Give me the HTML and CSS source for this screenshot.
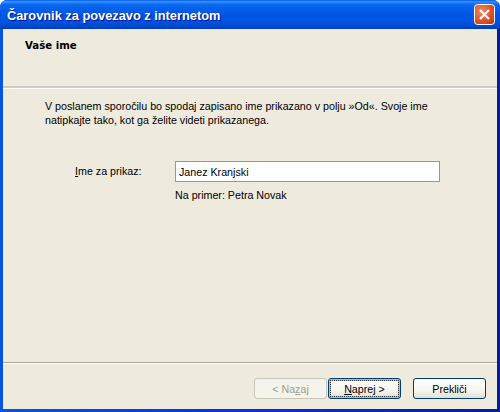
FILE: index.html
```html
<!DOCTYPE html>
<html lang="sl">
<head>
  <meta charset="UTF-8">
  <title>Čarovnik za povezavo z internetom</title>
  <link rel="stylesheet" href="styles.css">
</head>
<body>

<div class="window">
  <div class="titlebar">
    <span class="title">Čarovnik za povezavo z internetom</span>
    <svg class="close" width="21" height="21" viewBox="0 0 21 21">
      <defs>
        <radialGradient id="closeBg" cx="35%" cy="35%" r="80%">
          <stop offset="0" stop-color="#ee8a6c"/>
          <stop offset="0.55" stop-color="#e0572f"/>
          <stop offset="1" stop-color="#c13a12"/>
        </radialGradient>
      </defs>
      <rect x="0.5" y="0.5" width="20" height="20" rx="3" fill="url(#closeBg)" stroke="#fff"/>
      <path d="M6 6 L15 15 M15 6 L6 15" stroke="#fff" stroke-width="2.2" fill="none"/>
    </svg>
  </div>

  <div class="pane">
    <div class="header">Vaše ime</div>

    <div class="content">
      <p class="intro">V poslanem sporočilu bo spodaj zapisano ime prikazano v polju »Od«. Svoje ime natipkajte tako, kot ga želite videti prikazanega.</p>

      <div class="field">
        <label class="field-label" for="name"><u>I</u>me za prikaz:</label>
        <div class="field-main">
          <input class="textbox" id="name" type="text" value="Janez Kranjski">
          <div class="hint">Na primer: Petra Novak</div>
        </div>
      </div>
    </div>

    <div class="footer">
      <button class="btn" disabled>&lt; Na<u>z</u>aj</button>
      <button class="btn btn-default"><span class="focus"><u>N</u>aprej &gt;</span></button>
      <button class="btn btn-cancel">Prekliči</button>
    </div>
  </div>
</div>

</body>
</html>
```

FILE: styles.css
```css
* {
  margin: 0;
  padding: 0;
  box-sizing: border-box;
}

html, body {
  width: 500px;
  height: 412px;
  overflow: hidden;
}

body {
  font-family: "Liberation Sans", Arial, sans-serif;
  font-size: 10.7px;
  color: #000;
  background: #fff;
}

.window {
  width: 500px;
  height: 412px;
  display: flex;
  flex-direction: column;
  border-radius: 7px 7px 0 0;
  overflow: hidden;
  background: linear-gradient(to right, #0854e0 0, #0831d9 50%, #001ea0 100%);
}

.titlebar {
  height: 29px;
  flex: none;
  display: flex;
  align-items: center;
  justify-content: space-between;
  padding: 0 5px 0 7px;
  background: linear-gradient(to bottom, #0058ee 0%, #3a93ff 6%, #0a6af0 14%, #0055e5 50%, #0054e3 75%, #0048d0 90%, #003dc0 100%);
}

.title {
  font-family: "Liberation Sans", Arial, sans-serif;
  font-size: 12.8px;
  font-weight: bold;
  color: #fff;
  padding-top: 2px;
  text-shadow: 1px 1px 1px #0f1089;
}

.close {
  display: block;
}

.pane {
  flex: 1;
  display: flex;
  flex-direction: column;
  margin: 0 3px 3px 3px;
  background: #eeeade;
  min-height: 0;
}

.header {
  height: 59px;
  flex: none;
  padding: 11px 0 0 22px;
  font-weight: bold;
  font-family: "DejaVu Sans", sans-serif;
  font-size: 10.2px;
  border-bottom: 2px solid;
  border-color: #d0cdbc;
  box-shadow: 0 1px 0 #fff;
}

.content {
  flex: 1;
  padding: 11px 40px 0 42px;
}

.intro {
  line-height: 14px;
  width: 410px;
}

.field {
  display: flex;
  margin-top: 34px;
}

.field-label {
  flex: 0 0 130px;
  padding: 4px 0 0 30px;
}

.field-main {
  flex: 1;
}

.textbox {
  display: block;
  width: 265px;
  height: 21px;
  padding: 0 3px;
  border: 1px solid #7f9db9;
  background: #fff;
  font: inherit;
  color: #000;
  outline: none;
}

.hint {
  margin-top: 7px;
}

.footer {
  height: 47px;
  flex: none;
  display: flex;
  justify-content: flex-end;
  padding: 15px 11px 0 0;
  border-top: 1px solid #aca899;
  box-shadow: inset 0 1px 0 #fff;
}

.btn {
  width: 73px;
  height: 21px;
  font: inherit;
  color: #000;
  border: 1px solid #003c74;
  border-radius: 3px;
  background: linear-gradient(to bottom, #fff 0%, #f5f4ee 60%, #e3e0d2 100%);
}

.btn:disabled {
  color: #a19e8e;
  border-color: #c9c7ba;
  background: #f4f3ec;
}

.btn-default {
  margin-left: 1px;
  padding: 1px;
  box-shadow: inset 0 0 0 2px #a9bfe2;
}

.focus {
  display: flex;
  align-items: center;
  justify-content: center;
  height: 100%;
  outline: 1px dotted #333;
  outline-offset: -1px;
}

.btn-cancel {
  margin-left: 12px;
}
```
